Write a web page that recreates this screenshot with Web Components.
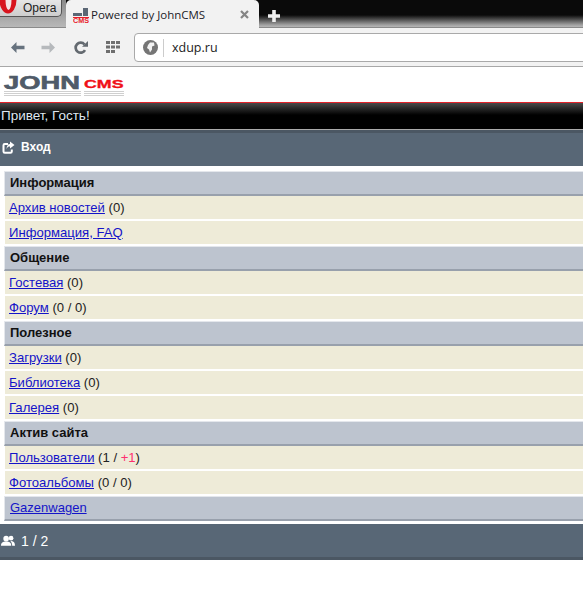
<!DOCTYPE html>
<html>
<head>
<meta charset="utf-8">
<title>Powered by JohnCMS</title>
<style>
html, body { margin: 0; padding: 0; background: #fff; overflow: hidden; }
body { font-family: "Liberation Sans", Arial, sans-serif; font-size: 13px; }
</style>
</head>
<body>
<browser-chrome></browser-chrome>
<site-logo></site-logo>
<hello-bar>Привет, Гость!</hello-bar>
<nav-bar icon="enter">Вход</nav-bar>
<menu-list>
  <section-head>Информация</section-head>
  <menu-row><a href="#">Архив новостей</a> (0)</menu-row>
  <menu-row><a href="#">Информация, FAQ</a></menu-row>
  <section-head>Общение</section-head>
  <menu-row><a href="#">Гостевая</a> (0)</menu-row>
  <menu-row><a href="#">Форум</a> (0 / 0)</menu-row>
  <section-head>Полезное</section-head>
  <menu-row><a href="#">Загрузки</a> (0)</menu-row>
  <menu-row><a href="#">Библиотека</a> (0)</menu-row>
  <menu-row><a href="#">Галерея</a> (0)</menu-row>
  <section-head>Актив сайта</section-head>
  <menu-row><a href="#">Пользователи</a> (1 / <span style="color:#ff2f6e">+1</span>)</menu-row>
  <menu-row><a href="#">Фотоальбомы</a> (0 / 0)</menu-row>
  <section-head plain><a href="#">Gazenwagen</a></section-head>
</menu-list>
<nav-bar icon="users" class="foot">1 / 2</nav-bar>

<script>
//small helper, every element here is just a style + markup
function define(name, html, setup){
    customElements.define(name, class extends HTMLElement {
        constructor(){
            super();
            this.attachShadow({mode:"open"});
            this.shadowRoot.innerHTML = html;
        }
        connectedCallback(){
            if(setup) setup(this);
        }
    });
}

define("browser-chrome", `
<style>
:host { display:block; height:67px; font-family:"Open Sans","Noto Sans",sans-serif; }
.strip { height:28px; display:flex; position:relative; background:linear-gradient(#0a0a0a 0,#0a0a0a 15px,#a2a2a2 25px,#b5b5b5 27px,#8a8a8a 27px); }
.left { width:66px; height:28px; flex:none; background:linear-gradient(#8a8a8a,#b8b8b8 27px,#8a8a8a 27px); }
.opera { width:62px; height:17px; background:linear-gradient(#e6e6e6,#cdcdcd); border-radius:0 0 5px 0; border:solid #555; border-width:0 1px 1px 0; box-sizing:border-box; font-size:12px; color:#222; font-family:"Liberation Sans",sans-serif; padding:1px 0 0 23px; position:relative; overflow:hidden; }
.opera svg { position:absolute; left:0; top:0; }
.tab { width:193px; height:28px; background:#f2f2f2; border-radius:5px 5px 0 0; box-sizing:border-box; padding:0 10px 0 7px; display:flex; align-items:center; font-size:11.5px; color:#1c1c28; position:relative; }
.tab svg.fav { margin:2px 2px 0 0; flex:none; }
.tab b { font-weight:400; flex:1; white-space:nowrap; }
.plus { margin:10px 0 0 9px; }
.tools { height:39px; background:#f2f2f2; box-sizing:border-box; border-bottom:1px solid #a8a8a8; display:flex; align-items:center; padding-top:1px; }
.tools svg { display:block; flex:none; }
.address { flex:1; height:27px; margin-left:13px; margin-right:-6px; background:#fff; border:1px solid #a9a9a9; border-radius:4px; display:flex; align-items:center; padding-left:8px; font-size:12.5px; color:#222; }
.sep { width:1px; height:18px; background:#ccc; margin:0 8px 0 5px; }
</style>
<div class="strip">
  <div class="left"><div class="opera"><svg width="18" height="14" viewBox="0 0 18 14"><ellipse cx="8" cy="0" rx="8.500" ry="13.500" fill="#d8141e"/><ellipse cx="8.500" cy="0" rx="3" ry="10" fill="#f4e4e4"/></svg>Opera</div></div>
  <div class="tab">
    <svg class="fav" width="16" height="16" viewBox="0 0 16 16"><path d="M0 6h9v3H0zM10 1h5v8h-5z" fill="#5b6775"/><rect x="0" y="10" width="16" height="1" fill="#e8202a"/><text x="0" y="16" font-family="Liberation Sans" font-weight="700" font-size="6.500" fill="#e8202a" textLength="16" lengthAdjust="spacingAndGlyphs">CMS</text></svg>
    <b>Powered by JohnCMS</b>
    <svg width="9" height="9" viewBox="0 0 9 9"><path d="M1 1l7 7M8 1l-7 7" stroke="#858585" stroke-width="2.2"/></svg>
  </div>
  <svg class="plus" width="12" height="12" viewBox="0 0 12 12"><path d="M6 0v12M0 6h12" stroke="#efefef" stroke-width="3.6"/></svg>
</div>
<div class="tools">
  <svg style="margin-left:10px" width="15" height="13" viewBox="0 0 15 13"><path d="M6.500 1L1 6.500l5.500 5.500V8.200h8V4.800h-8z" fill="#66727e"/></svg>
  <svg style="margin-left:16px" width="15" height="13" viewBox="0 0 15 13"><path d="M8.500 1l5.500 5.500L8.500 12V8.200h-8V4.800h8z" fill="#b6b9bc"/></svg>
  <svg style="margin-left:18px" width="14" height="14" viewBox="0 0 14 14"><path d="M11 9.200A5 5 0 1 1 10.500 3.500" fill="none" stroke="#646a70" stroke-width="2.700"/><path d="M8 5.800h6V0z" fill="#646a70"/></svg>
  <svg style="margin-left:18px" width="15" height="13" viewBox="0 0 15 13" fill="#6e6e6e"><path d="M0 0h4v3H0zM5 0h4v3H5zM10 0h4v3h-4zM0 4.500h4v3H0zM5 4.500h4v3H5zM10 4.500h4v3h-4zM0 9h4v3H0zM5 9h4v3H5z"/></svg>
  <div class="address">
    <svg width="15" height="15" viewBox="0 0 15 15"><circle cx="7.500" cy="7.500" r="7.500" fill="#757575"/><path d="M7 2.500h4l.5 3-2.500 1v3l-2 3-1-3-2-1.500 1-3z" fill="#f2f2f2"/></svg>
    <span class="sep"></span>
    <span>xdup.ru</span>
  </div>
</div>
`);

define("site-logo", `
<style>
:host { display:block; height:36px; background:#fff; box-sizing:border-box; border-bottom:1px solid #e2222a; font-family:"Liberation Sans",sans-serif; font-weight:700; overflow:hidden; }
.wrap { display:flex; align-items:flex-end; height:23px; padding-left:4px; }
.john { color:#4f5b68; font-size:17.5px; line-height:14px; height:14px; width:77px; }
.john span { display:inline-block; transform:scaleX(1.56); transform-origin:0 50%; white-space:nowrap; -webkit-text-stroke:.6px #4f5b68; }
.cms { color:#f01018; font-size:11px; line-height:10px; height:10px; width:40px; margin:0 0 1px 3px; }
.cms span { display:inline-block; transform:scaleX(1.62); transform-origin:0 50%; -webkit-text-stroke:.3px #f01018; }
.echo { display:flex; margin:1px 0 0 4px; height:6px; }
.echo i { display:block; height:6px; background:repeating-linear-gradient(#cfcfcf 0 1px,#fff 1px 2px); }
</style>
<div class="wrap"><div class="john"><span>JOHN</span></div><div class="cms"><span>CMS</span></div></div>
<div class="echo"><i style="width:77px"></i><i style="width:40px;margin-left:3px"></i></div>
`);

define("hello-bar", `
<style>
:host { display:block; height:27px; box-sizing:border-box; padding:5px 0 0 1px; line-height:15px; font-size:13.5px; color:#dfe6f0;
  background:linear-gradient(#4a4a4a 0,#000 12px,#000 100%); border-bottom:1px solid #aaa; }
</style>
<slot></slot>
`);

define("nav-bar", `
<style>
:host { display:flex; align-items:center; height:36px; box-sizing:border-box; background:#586776; color:#fff; font-size:12px; border-top:3px solid #4b5763; padding:0 0 5px 2px; }
:host(.foot) { border-top:0; border-bottom:3px solid #4b5763; height:36px; margin-top:3px; font-size:14px; padding:0 0 0 1px; }
svg { margin-right:6px; flex:none; display:block; }
.t { font-weight:700; }
:host(.foot) .t { font-weight:400; }
</style>
<span id="i"></span><span class="t"><slot></slot></span>
`, function(el){
    var icons = {
        enter:'<svg width="13" height="13" viewBox="0 0 13 13"><path d="M6 3H2.800a1.300 1.300 0 0 0-1.300 1.300v6.200a1.300 1.300 0 0 0 1.300 1.300H8.500a1.300 1.300 0 0 0 1.300-1.300V8.500" fill="none" stroke="#fff" stroke-width="2"/><path d="M8 0.500l4.500 3.500L8 7.500V5.500C6.500 5.500 5 6 4.500 8.500c0-3.500 1.500-5.500 3.500-5.500z" fill="#fff"/></svg>',
        users:'<svg width="14" height="11" viewBox="0 0 15 11"><circle cx="5.500" cy="3.500" r="3" fill="#fff"/><path d="M0 11c0-3.500 2-4.500 5.500-4.500S11 7.500 11 11z" fill="#fff"/><circle cx="10.800" cy="3" r="2.500" fill="#fff"/><path d="M10 6c3 0 5 1 5 5h-3c0-2-1-4-2-5z" fill="#fff"/></svg>'
    };
    el.shadowRoot.getElementById("i").innerHTML = icons[el.getAttribute("icon")];
});

define("menu-list", `
<style>
:host { display:block; padding:5px 0 0 4px; }
</style>
<slot></slot>
`);

define("section-head", `
<style>
:host { display:block; height:25px; box-sizing:border-box; background:#bdc4cf; border-left:1px solid #e4e7ec; border-top:1px solid #e4e7ec; border-bottom:2px solid #98a0ac; padding:0 0 0 5px; line-height:22px; font-weight:700; font-size:13px; color:#111; }
:host([plain]) { font-weight:400; }
::slotted(a) { color:#1414c8; }
</style>
<slot></slot>
`);

define("menu-row", `
<style>
:host { display:block; height:25px; box-sizing:border-box; margin-left:1px; padding-left:4px; background:#eeebd8; border-bottom:2px solid #fff; line-height:23px; font-size:13.1px; color:#222; }
::slotted(a) { color:#1414c8; }
</style>
<slot></slot>
`);
</script>
</body>
</html>
